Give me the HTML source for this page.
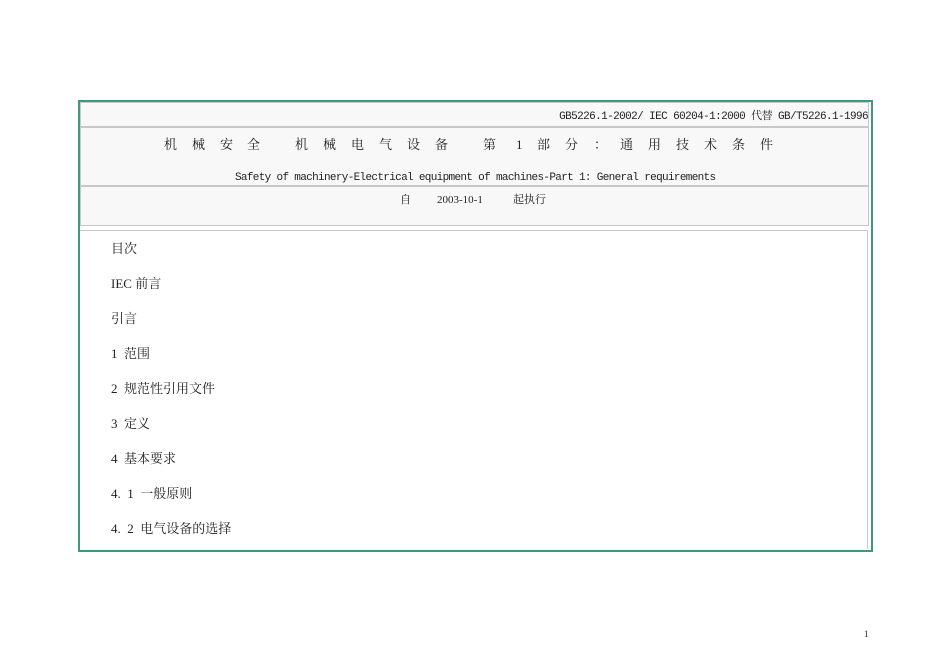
<!DOCTYPE html>
<html><head><meta charset="utf-8"><style>
body{margin:0;width:950px;height:672px;background:#fff;position:relative;font-family:"Liberation Serif","Noto Serif CJK SC",serif;color:#222}
.a{position:absolute}
.outer{left:78px;top:100px;width:791px;height:448px;border:2px solid #3d9a78}
.box{position:absolute;left:80px;width:787px;background:#f8f8f8;border:1px solid #c8c8c8}
.t{position:absolute;white-space:pre;line-height:1}
.c{position:absolute;top:138px;font-size:13px;line-height:1}
.item{position:absolute;left:111px;font-size:13px;white-space:pre;line-height:1}
</style></head><body>
<div class="a outer"></div>
<div class="box" style="top:102px;height:23px"></div>
<div class="box" style="top:127px;height:57px"></div>
<div class="box" style="top:186px;height:38px"></div>
<div class="a" style="left:80px;top:230px;width:787px;height:318px;background:#fff;border-top:1px solid #c8c8c8;border-right:1px solid #c8c8c8"></div>
<div class="t" style="right:82px;top:112px;font-size:11px;font-family:'Liberation Mono','Noto Serif CJK SC',monospace;letter-spacing:-0.6px">GB5226.1-2002/ IEC 60204-1:2000 代替 GB/T5226.1-1996</div>
<span class="c" style="left:164px">机</span><span class="c" style="left:192px">械</span><span class="c" style="left:220px">安</span><span class="c" style="left:247px">全</span>
<span class="c" style="left:295px">机</span><span class="c" style="left:323px">械</span><span class="c" style="left:351px">电</span><span class="c" style="left:379px">气</span><span class="c" style="left:407px">设</span><span class="c" style="left:435px">备</span>
<span class="c" style="left:483px">第</span><span class="c" style="left:516px">1</span><span class="c" style="left:537px">部</span><span class="c" style="left:565px">分</span><span class="c" style="left:594px">：</span>
<span class="c" style="left:620px">通</span><span class="c" style="left:648px">用</span><span class="c" style="left:676px">技</span><span class="c" style="left:704px">术</span><span class="c" style="left:732px">条</span><span class="c" style="left:760px">件</span>
<div class="t" style="left:235px;top:173px;font-size:11px;font-family:'Liberation Mono',monospace;letter-spacing:-0.67px">Safety of machinery-Electrical equipment of machines-Part 1: General requirements</div>
<div class="t" style="left:400px;top:195px;font-size:11px">自</div>
<div class="t" style="left:437px;top:195px;font-size:11px">2003-10-1</div>
<div class="t" style="left:513px;top:195px;font-size:11px">起执行</div>
<div class="item" style="top:242px">目次</div>
<div class="item" style="top:277px">IEC 前言</div>
<div class="item" style="top:312px">引言</div>
<div class="item" style="top:347px">1  范围</div>
<div class="item" style="top:382px">2  规范性引用文件</div>
<div class="item" style="top:417px">3  定义</div>
<div class="item" style="top:452px">4  基本要求</div>
<div class="item" style="top:487px">4.  1  一般原则</div>
<div class="item" style="top:522px">4.  2  电气设备的选择</div>
<div class="t" style="left:864px;top:630px;font-size:9px">1</div>
</body></html>
